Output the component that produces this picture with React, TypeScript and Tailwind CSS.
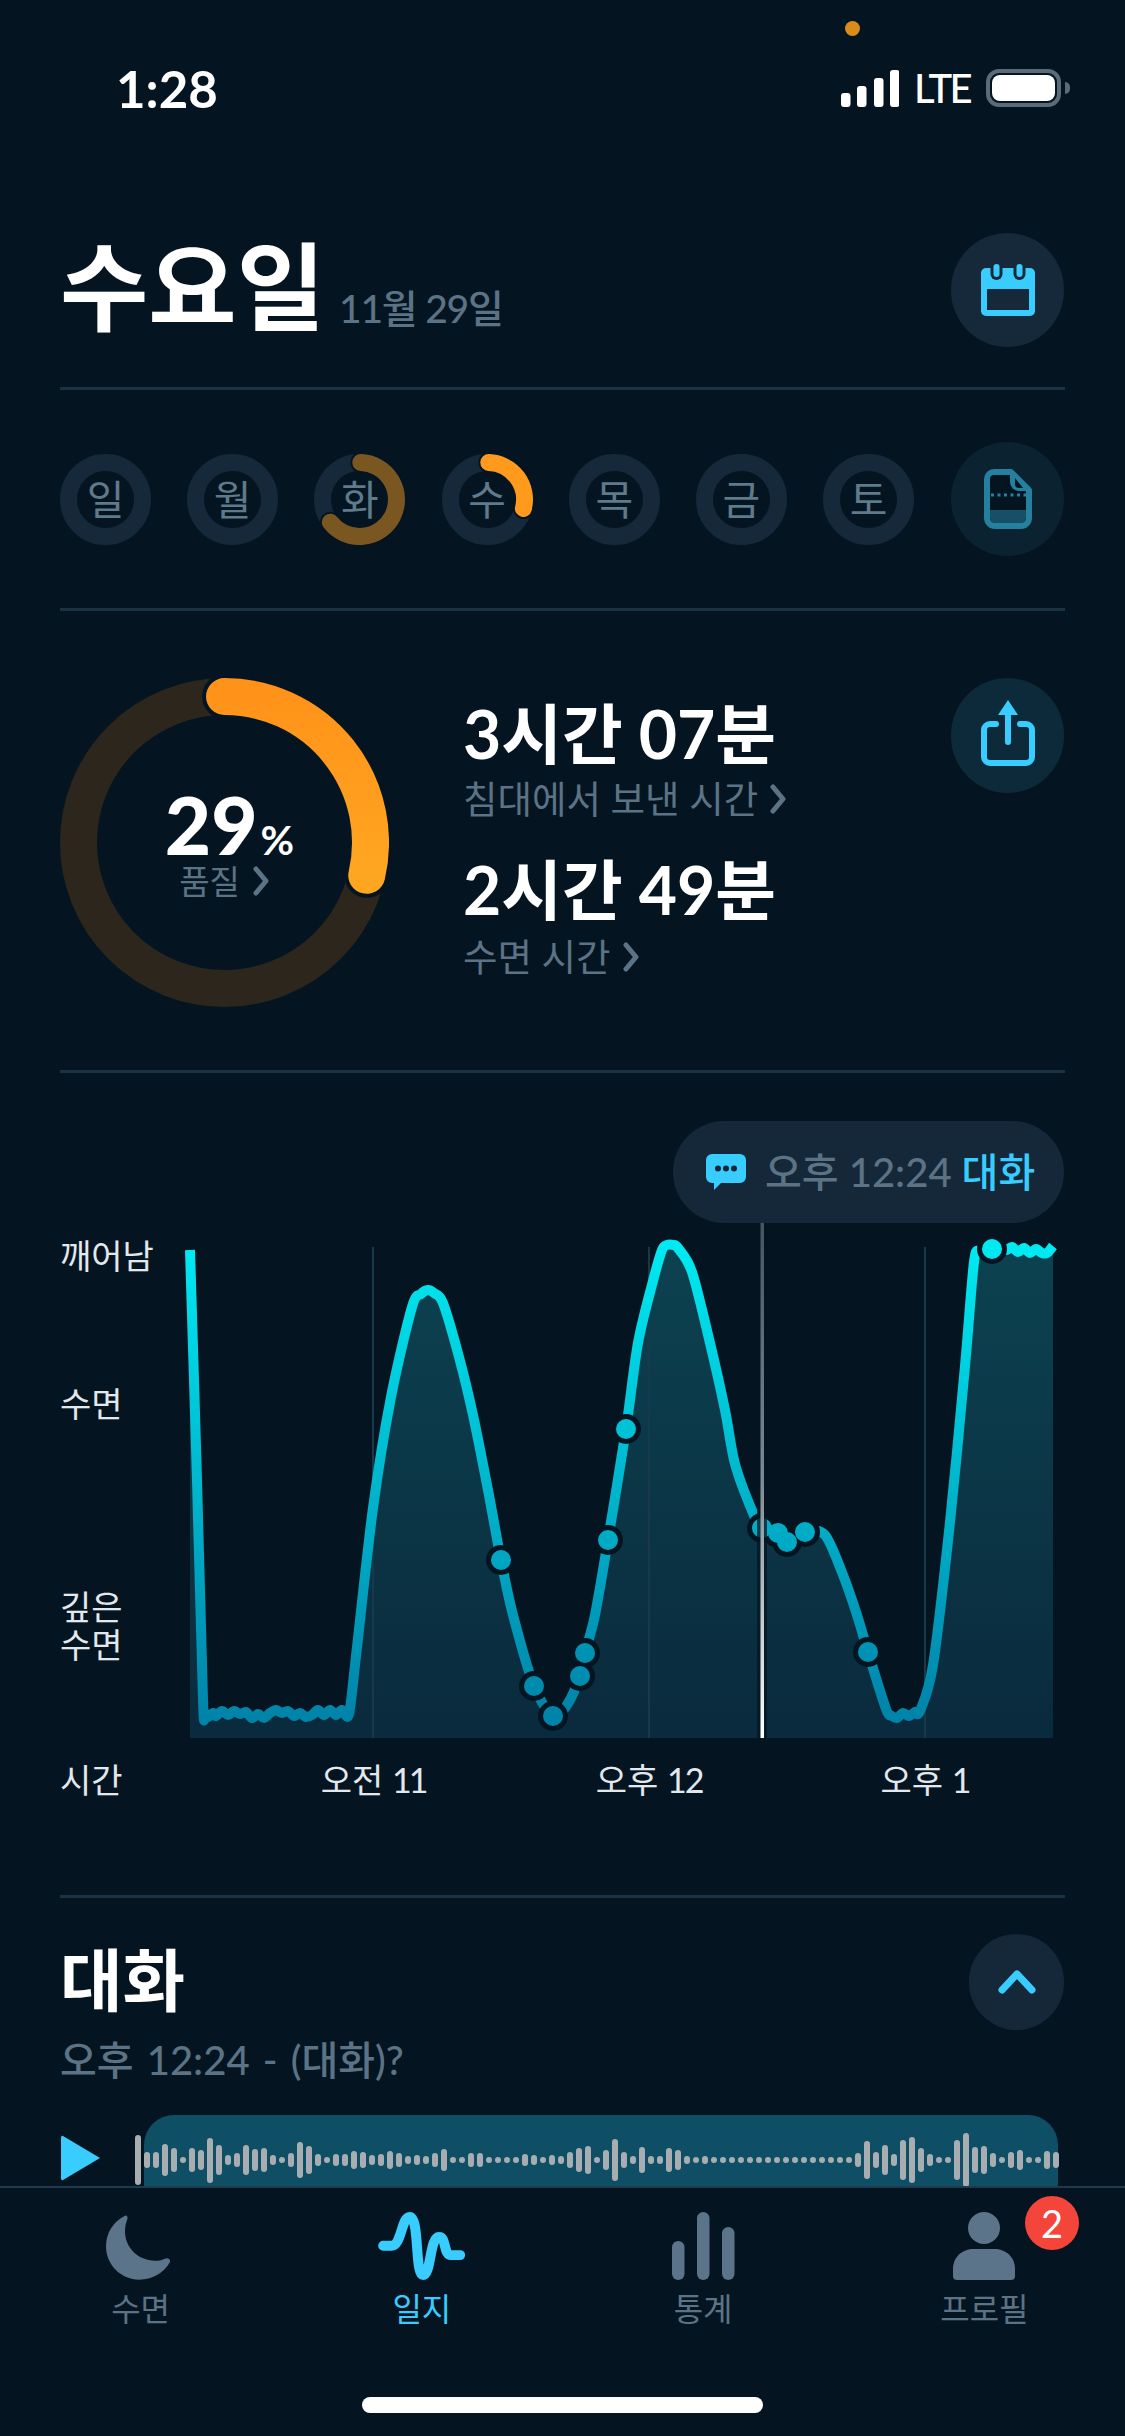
const BG = "#041521";

function polar(cx: number, cy: number, r: number, deg: number) {
  const a = ((deg - 90) * Math.PI) / 180;
  return [cx + r * Math.cos(a), cy + r * Math.sin(a)];
}
function arc(cx: number, cy: number, r: number, s: number, e: number) {
  const [x1, y1] = polar(cx, cy, r, s);
  const [x2, y2] = polar(cx, cy, r, e);
  return `M${x1} ${y1}A${r} ${r} 0 ${e - s > 180 ? 1 : 0} 1 ${x2} ${y2}`;
}

function Chevron() {
  return (
    <svg width="18" height="30" viewBox="0 0 18 30" className="shrink-0">
      <path d="M4 3 L14 15 L4 27" fill="none" stroke="#5b7385" strokeWidth="5" strokeLinecap="round" strokeLinejoin="round" />
    </svg>
  );
}

function DayRing({ label, end, color }: { label: string; end?: number; color?: string }) {
  return (
    <div className="relative w-[91px] h-[91px] shrink-0">
      <svg width="91" height="91" viewBox="0 0 91 91">
        <circle cx="45.5" cy="45.5" r="37" fill="none" stroke="#15293a" strokeWidth="17" />
        {end ? (
          <>
            <path d={arc(45.5, 45.5, 37, 2, end)} fill="none" stroke={BG} strokeWidth="21" strokeLinecap="round" />
            <path d={arc(45.5, 45.5, 37, 2, end)} fill="none" stroke={color} strokeWidth="17" strokeLinecap="round" />
          </>
        ) : null}
      </svg>
      <div className="absolute inset-0 flex items-center justify-center text-[41px] leading-none text-[#5f7a8b]">{label}</div>
    </div>
  );
}

const WAVE = [50,50,98,72,18,70,62,135,90,32,44,90,64,72,32,18,44,108,82,38,18,36,36,52,46,28,38,52,44,24,28,24,42,68,20,18,44,42,18,16,16,18,36,30,18,30,26,46,74,84,18,58,125,50,24,76,24,24,72,62,26,20,24,18,18,18,18,18,18,18,18,18,18,18,18,18,18,18,18,44,114,48,88,38,122,136,72,34,18,18,122,160,78,86,44,18,46,62,18,18,54,46];

const RAW: [number, number][] = [
  [190,1250],[197,1480],[203,1700],[205,1716],[208,1717],[213,1713],[216,1716],[222,1711],[228,1715],[234,1711],[240,1714],[246,1712],[252,1718],[258,1714],[264,1718],[270,1713],[276,1710],[282,1713],[288,1711],[294,1716],[300,1713],[306,1717],[312,1715],[318,1710],[324,1715],[330,1710],[336,1715],[342,1710],[349,1714],
  [356,1656],[373,1508],[391,1397],[412,1307],[421,1294],[428,1290],[434,1293],[443,1303],[459,1357],[473,1415],[488,1490],[501,1560],[513,1615],[534,1686],[553,1716],[567,1705],[580,1676],[585,1653],[595,1615],[608,1540],[626,1429],[638,1343],[653,1281],[662,1250],[667,1245],[673,1245],[678,1248],[692,1272],[710,1343],[725,1410],[735,1464],[753,1513],[762,1528],[778,1533],[787,1542],[805,1532],[825,1535],[843,1575],[857,1615],[868,1652],[886,1709],[892,1716],[897,1718],[903,1713],[909,1716],[915,1712],[920,1711],[933,1665],[950,1522],[965,1366],[974,1262],[980,1251],[992,1249],[1000,1246],[1006,1250],[1012,1247],[1018,1252],[1024,1248],[1030,1253],[1036,1249],[1042,1253],[1047,1253],[1053,1246],
];

function smooth(p: [number, number][]) {
  let d = `M${p[0][0]} ${p[0][1]}`;
  for (let i = 0; i < p.length - 1; i++) {
    const a = p[Math.max(i - 1, 0)];
    const b = p[i];
    const c = p[i + 1];
    const e = p[Math.min(i + 2, p.length - 1)];
    const t = 0.15;
    d += `C${b[0] + (c[0] - a[0]) * t} ${b[1] + (c[1] - a[1]) * t} ${c[0] - (e[0] - b[0]) * t} ${c[1] - (e[1] - b[1]) * t} ${c[0]} ${c[1]}`;
  }
  return d;
}

const DOTS = [[501,1560],[534,1686],[553,1716],[580,1676],[585,1653],[608,1540],[626,1429],[762,1528],[778,1533],[787,1542],[805,1532],[868,1652],[992,1249]];

function Chart() {
  const line = smooth(RAW);
  return (
    <svg width="885" height="520" viewBox="180 1223 885 520" className="shrink-0">
      <defs>
        <linearGradient id="ln" gradientUnits="userSpaceOnUse" x1="0" y1="1245" x2="0" y2="1720">
          <stop offset="0" stopColor="#00eaf2" />
          <stop offset="1" stopColor="#0083a9" />
        </linearGradient>
        <linearGradient id="ar" gradientUnits="userSpaceOnUse" x1="0" y1="1245" x2="0" y2="1738">
          <stop offset="0" stopColor="#0c4250" />
          <stop offset="1" stopColor="#0a2a3d" />
        </linearGradient>
        <linearGradient id="pl" gradientUnits="userSpaceOnUse" x1="0" y1="1223" x2="0" y2="1738">
          <stop offset="0" stopColor="#46555f" />
          <stop offset="0.5" stopColor="#7d8a93" />
          <stop offset="1" stopColor="#ffffff" />
        </linearGradient>
      </defs>
      <path d={`${line}L1053 1738L190 1738Z`} fill="url(#ar)" />
      {[373, 649, 925].map((x) => (
        <line key={x} x1={x} x2={x} y1="1247" y2="1738" stroke="#17394a" strokeWidth="2" />
      ))}
      <path d={line} fill="none" stroke="url(#ln)" strokeWidth="10" strokeLinejoin="round" />
      {DOTS.map(([x, y]) => (
        <circle key={x} cx={x} cy={y} r="15" fill={BG} />
      ))}
      {DOTS.map(([x, y]) => (
        <circle key={x} cx={x} cy={y} r="10" fill="url(#ln)" />
      ))}
      <rect x="757" y="1223" width="10" height="515" fill={BG} opacity="0.75" />
      <rect x="760.5" y="1223" width="3.5" height="515" fill="url(#pl)" />
    </svg>
  );
}

function NavItem({ label, active, children }: { label: string; active?: boolean; children: React.ReactNode }) {
  return (
    <div className="relative flex flex-col items-center">
      <div className="h-[68px] flex items-end justify-center">{children}</div>
      <div className={`mt-[9px] text-[32px] leading-[40px] ${active ? "text-[#38ccff]" : "text-[#5b7385]"}`}>{label}</div>
    </div>
  );
}

function Divider() {
  return <div className="mx-[60px] h-[3px] bg-[#1a3342] shrink-0" />;
}

export default function App() {
  return (
    <div
      className="relative w-[1125px] h-[2436px] overflow-hidden bg-[#041521] text-white"
      style={{ fontFamily: 'Lato, "Noto Sans CJK KR", sans-serif' }}
    >
      <div className="h-[2186px] overflow-hidden flex flex-col">
        {/* status bar */}
        <div className="relative h-[176px] shrink-0 flex items-center justify-between pl-[116px] pr-[64px]">
          <div className="absolute left-[845px] top-[21px] w-[15px] h-[15px] rounded-full bg-[#d98c1a]" />
          <div className="text-[51px] leading-none font-bold">1:28</div>
          <div className="flex items-center">
            <svg width="58" height="38" viewBox="0 0 58 38">
              <rect x="0" y="24" width="9.5" height="14" rx="3" fill="#fff" />
              <rect x="16" y="17" width="9.5" height="21" rx="3" fill="#fff" />
              <rect x="33" y="9" width="9.5" height="29" rx="3" fill="#fff" />
              <rect x="49" y="1" width="9.5" height="37" rx="3" fill="#fff" />
            </svg>
            <div className="ml-[15px] w-[57px] text-[40px] leading-none tracking-[-2.5px] font-medium">LTE</div>
            <div className="ml-[15px] relative w-[75px] h-[38px] rounded-[13px] border-4 border-[#5b6b78] p-[2px]">
              <div className="w-full h-full rounded-[8px] bg-white" />
              <div className="absolute right-[-13px] top-[9px] w-[5px] h-[12px] rounded-r-full bg-[#5b6b78]" />
            </div>
          </div>
        </div>

        {/* header */}
        <div className="h-[211px] shrink-0 flex justify-between pl-[60px] pr-[61px] pt-[57px]">
          <div className="flex items-baseline h-[114px]">
            <span className="text-[96px] leading-[106px] font-bold">수요일</span>
            <span className="ml-[14px] text-[39px] leading-none font-medium tracking-[-1.2px] text-[#5b7385]">11월 29일</span>
          </div>
          <div className="w-[113px] h-[114px] rounded-full bg-[#15293a] flex items-center justify-center">
            <svg width="54" height="52" viewBox="0 0 54 52">
              <rect x="0" y="4" width="54" height="48" rx="5" fill="#38ccff" />
              <rect x="6" y="25" width="42" height="21" fill="#15293a" />
              <rect x="9.5" y="-2" width="12" height="18" rx="6" fill="#15293a" />
              <rect x="32.5" y="-2" width="12" height="18" rx="6" fill="#15293a" />
              <rect x="12.5" y="0" width="6" height="13" rx="3" fill="#38ccff" />
              <rect x="35.5" y="0" width="6" height="13" rx="3" fill="#38ccff" />
            </svg>
          </div>
        </div>
        <Divider />

        {/* week */}
        <div className="h-[218px] shrink-0 flex items-center pl-[60px] pr-[61px]">
          <div className="flex gap-[36.2px] items-center">
            <DayRing label="일" />
            <DayRing label="월" />
            <DayRing label="화" end={232} color="#7a5621" />
            <DayRing label="수" end={104} color="#ff9a1c" />
            <DayRing label="목" />
            <DayRing label="금" />
            <DayRing label="토" />
          </div>
          <div className="ml-auto w-[113px] h-[114px] rounded-full bg-[#0b2230] flex items-center justify-center">
            <svg width="48" height="60" viewBox="0 0 48 60">
              <path d="M10 3H27L45 21V49a8 8 0 0 1-8 8H11a8 8 0 0 1-8-8V10a7 7 0 0 1 7-7Z" fill={BG} stroke="#25809f" strokeWidth="6" strokeLinejoin="round" />
              <path d="M6 41H42V49a5 5 0 0 1-5 5H11a5 5 0 0 1-5-5Z" fill="#175066" />
              <path d="M26 3V13a9 9 0 0 0 9 9H45Z" fill="#25809f" />
              <path d="M31 9 L39 19 H35 a4 4 0 0 1 -4 -4 Z" fill={BG} />
              <path d="M7 26H42" stroke="#25809f" strokeWidth="3" strokeDasharray="3 3.5" />
            </svg>
          </div>
        </div>
        <Divider />

        {/* summary */}
        <div className="h-[459px] shrink-0 flex items-start pl-[60px] pr-[61px] pt-[67px]">
          <div className="relative w-[329px] h-[329px] shrink-0">
            <svg width="329" height="329" viewBox="0 0 329 329">
              <defs>
                <linearGradient id="og" x1="0" y1="0" x2="0" y2="1">
                  <stop offset="0" stopColor="#ff9319" />
                  <stop offset="1" stopColor="#ffa621" />
                </linearGradient>
              </defs>
              <circle cx="164.5" cy="164.5" r="146" fill="none" stroke="#2c261c" strokeWidth="37" />
              <path d={arc(164.5, 164.5, 146, 0, 103)} fill="none" stroke={BG} strokeWidth="45" strokeLinecap="round" />
              <path d={arc(164.5, 164.5, 146, 0, 103)} fill="none" stroke="url(#og)" strokeWidth="37" strokeLinecap="round" />
            </svg>
            <div className="absolute inset-0 flex flex-col items-center pt-[111px]">
              <div className="h-[72px] flex items-baseline pl-[10px]">
                <span className="text-[80px] leading-[70px] font-black">29</span>
                <span className="ml-[3px] text-[41px] leading-[70px] font-bold">%</span>
              </div>
              <div className="h-[40px] flex items-center gap-[12px] text-[33px] leading-none text-[#5b7385]">
                품질
                <Chevron />
              </div>
            </div>
          </div>
          <div className="ml-[74px] pt-[16px]">
            <div className="text-[66px] leading-[80px] font-bold">3시간 07분</div>
            <div className="mt-[3px] h-[44px] flex items-center gap-[11px] text-[37.5px] leading-none text-[#5b7385]">
              침대에서 보낸 시간
              <Chevron />
            </div>
            <div className="mt-[29px] text-[66px] leading-[80px] font-bold">2시간 49분</div>
            <div className="mt-[5px] h-[44px] flex items-center gap-[11px] text-[37.5px] leading-none text-[#5b7385]">
              수면 시간
              <Chevron />
            </div>
          </div>
          <div className="ml-auto w-[113px] h-[115px] rounded-full bg-[#0c2a3a] flex items-center justify-center">
            <svg width="54" height="66" viewBox="0 0 54 66" className="mb-[5px]">
              <path d="M27 42V10" stroke="#38ccff" strokeWidth="6" strokeLinecap="round" fill="none" />
              <path d="M27 0L37 15H17Z" fill="#38ccff" />
              <path d="M15 24H9a6 6 0 0 0-6 6V57a6 6 0 0 0 6 6H45a6 6 0 0 0 6-6V30a6 6 0 0 0-6-6H39" stroke="#38ccff" strokeWidth="6" strokeLinecap="round" fill="none" />
            </svg>
          </div>
        </div>
        <Divider />

        {/* chart */}
        <div className="h-[822px] shrink-0 flex flex-col pt-[48px]">
          <div className="self-end mr-[61px] w-[391px] h-[102px] rounded-[51px] bg-[#15283a] flex items-center pl-[33px] text-[40px] leading-none text-[#5b7385] shrink-0">
            <svg width="40" height="36" viewBox="0 0 40 36" className="shrink-0">
              <path d="M6 0H34a6 6 0 0 1 6 6V23a6 6 0 0 1-6 6H15L8 36V29H6a6 6 0 0 1-6-6V6a6 6 0 0 1 6-6Z" fill="#38ccff" />
              <circle cx="12" cy="14.5" r="3" fill="#15283a" />
              <circle cx="20" cy="14.5" r="3" fill="#15283a" />
              <circle cx="28" cy="14.5" r="3" fill="#15283a" />
            </svg>
            <span className="ml-[19px] font-medium">오후 12:24</span>
            <span className="ml-[10px] text-[#38ccff] font-medium">대화</span>
          </div>
          <div className="flex shrink-0">
            <div className="w-[180px] pl-[60px] shrink-0 pt-[14px] text-[34px] leading-[38px] text-[#e3e8ec]">
              <div>깨어남</div>
              <div className="mt-[110px]">수면</div>
              <div className="mt-[165px]">
                깊은
                <br />
                수면
              </div>
            </div>
            <Chart />
          </div>
          <div className="mt-[18px] flex pl-[60px] text-[34px] leading-[38px] text-[#e3e8ec]">
            <div className="w-[175px]">시간</div>
            <div className="w-[276px] text-center">오전 <span className="tracking-[-3px]">11</span></div>
            <div className="w-[276px] text-center">오후 <span className="tracking-[-2px]">12</span></div>
            <div className="w-[276px] text-center">오후 <span className="tracking-[-2px]">1</span></div>
          </div>
        </div>
        <Divider />

        {/* conversation */}
        <div className="flex flex-col pt-[36px]">
          <div className="h-[96px] flex items-center justify-between pl-[60px] pr-[61px] shrink-0">
            <div className="text-[68px] leading-[80px] font-bold mb-[5px]">대화</div>
            <div className="w-[95px] h-[96px] rounded-full bg-[#15283a] flex items-center justify-center">
              <svg width="38" height="24" viewBox="0 0 38 24">
                <path d="M4 20L19 4L34 20" fill="none" stroke="#38ccff" strokeWidth="7" strokeLinecap="round" strokeLinejoin="round" />
              </svg>
            </div>
          </div>
          <div className="mt-[8px] pl-[60px] h-[44px] flex items-center text-[40px] leading-none font-medium [word-spacing:3px] text-[#5b7385] shrink-0">
            오후 12:24 - (대화)?
          </div>
          <div className="mt-[33px] flex items-start pl-[60px]">
            <svg width="41" height="46" viewBox="0 0 41 46" className="mt-[20px] shrink-0">
              <path d="M3 1L40 23L3 45Q1 46 1 43V3Q1 0 3 1Z" fill="#38ccff" />
            </svg>
            <div className="ml-[34px] mt-[20px] w-[6px] h-[50px] rounded-[3px] bg-[#a8adb2] shrink-0" />
            <div className="ml-[3px] w-[914px] h-[90px] rounded-t-[30px] bg-[#0e4f66] flex items-center gap-[3px] shrink-0">
              {WAVE.map((h, i) => (
                <div key={i} className="w-[6px] shrink-0 rounded-[3px] bg-[#a8adb2]" style={{ height: h / 3 }} />
              ))}
            </div>
          </div>
        </div>
      </div>

      {/* bottom nav */}
      <div className="relative h-[250px] border-t-2 border-[#1f3a4a] bg-[#041521] pt-[24px] grid grid-cols-4 items-start">
        <NavItem label="수면">
          <svg width="64" height="65" viewBox="48 62 192 193" className="mr-[5px]">
            <path d="M105 63C70 80 48 115 48 155C48 210 92 255 148 255C185 255 222 235 240 202C242 192 232 188 225 192C215 197 205 198 195 198C145 198 105 160 105 110C105 95 108 85 112 73C114 65 110 61 105 63Z" fill="#5b7489" />
          </svg>
        </NavItem>
        <NavItem label="일지" active>
          <svg width="88" height="68" viewBox="865 50 264 205">
            <path d="M880 152H905C935 152 935 65 960 65C990 65 975 240 1000 240C1025 240 1020 125 1048 125C1072 125 1060 180 1085 180H1112" fill="none" stroke="#38ccff" strokeWidth="30" strokeLinecap="round" strokeLinejoin="round" />
          </svg>
        </NavItem>
        <NavItem label="통계">
          <svg width="63" height="68" viewBox="0 0 63 68">
            <rect x="0" y="29" width="12.5" height="39" rx="6.25" fill="#5b7489" />
            <rect x="25" y="0" width="12.5" height="68" rx="6.25" fill="#5b7489" />
            <rect x="50" y="15" width="12.5" height="53" rx="6.25" fill="#5b7489" />
          </svg>
        </NavItem>
        <NavItem label="프로필">
          <svg width="62" height="68" viewBox="0 0 62 68">
            <circle cx="31" cy="16" r="16" fill="#5b7489" />
            <path d="M0 64V57C0 45 9 37 21 37H41C53 37 62 45 62 57V64a4 4 0 0 1-4 4H4a4 4 0 0 1-4-4Z" fill="#5b7489" />
          </svg>
        </NavItem>
        <div className="absolute left-[1025px] top-[8px] w-[54px] h-[54px] rounded-full bg-[#f4453b] flex items-center justify-center text-[38px] leading-none text-white">
          2
        </div>
        <div className="absolute left-[362px] top-[209px] w-[401px] h-[16px] rounded-full bg-white" />
      </div>
    </div>
  );
}
